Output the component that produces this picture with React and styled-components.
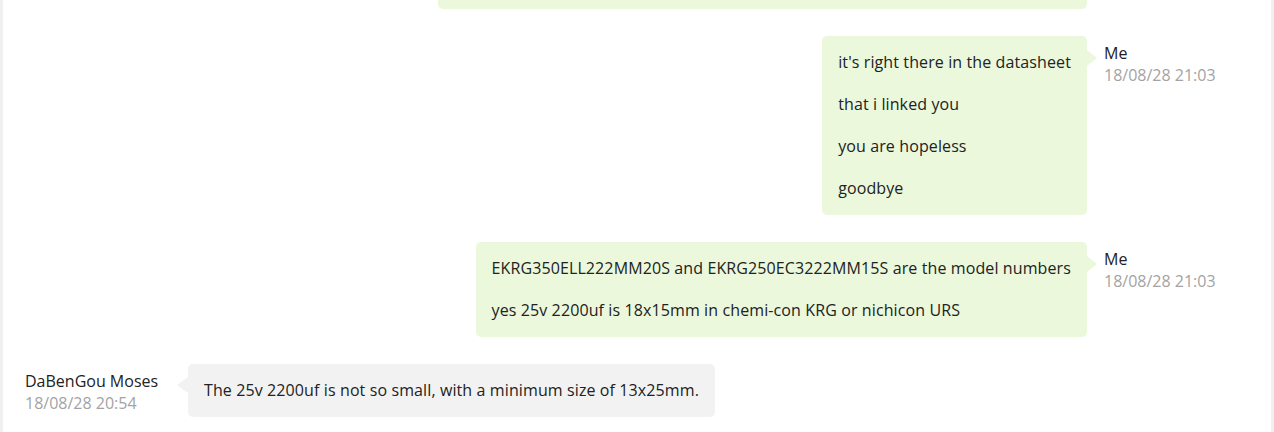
import React from 'react';
import styled, { createGlobalStyle } from 'styled-components';

const GlobalStyle = createGlobalStyle`
  html, body {
    margin: 0;
    padding: 0;
    background: #f0f0f0;
  }
  body {
    font-family: "Open Sans", "Liberation Sans", sans-serif;
    color: #222;
  }
`;

const Panel = styled.div`
  height: 432px;
  margin: 0 3px;
  background: #fff;
  overflow: hidden;
  display: flex;
  flex-direction: column;
  justify-content: flex-end;
  padding: 0 21px 15px 22px;
  box-sizing: border-box;
`;

const Row = styled.div`
  display: flex;
  flex-direction: ${p => (p.$mine ? 'row-reverse' : 'row')};
  align-items: flex-start;
  gap: 17px;
  margin-top: 27px;
  flex-shrink: 0;
`;

const Meta = styled.div`
  width: 146px;
  flex-shrink: 0;
  padding-top: 6px;
  font-size: 16px;
  line-height: 22px;
`;

const Name = styled.div`
  color: #222;
`;

const Time = styled.div`
  color: #a3a3a3;
`;

const Bubble = styled.div`
  position: relative;
  background: ${p => (p.$mine ? '#ebf8dc' : '#f2f2f2')};
  border-radius: 5px;
  padding: 16px;
  font-size: 16px;
  line-height: 21px;
  letter-spacing: 0.11px;
  ${p => p.$width && `width: ${p.$width}px; box-sizing: border-box;`}

  &::after {
    content: '';
    position: absolute;
    top: ${p => (p.$mine ? '14px' : '13px')};
    ${p => (p.$mine ? 'right: -10px;' : 'left: -11px;')}
    border-style: solid;
    border-color: transparent;
    border-width: 8px 0 8px 0;
    ${p =>
      p.$mine
        ? 'border-left: 10px solid #ebf8dc;'
        : 'border-right: 11px solid #f2f2f2;'}
  }
`;

const Line = styled.p`
  margin: 0 0 21px;
  white-space: nowrap;
  &:last-child {
    margin-bottom: 0;
  }
`;

const messages = [
  {
    mine: true,
    name: 'Me',
    time: '18/08/28 21:02',
    width: 649,
    lines: [
      'the datasheet lists the case sizes for every voltage and capacitance',
      'look at the table on page 2',
      'the 25v 2200uf part is right there',
    ],
  },
  {
    mine: true,
    name: 'Me',
    time: '18/08/28 21:03',
    lines: [
      "it's right there in the datasheet",
      'that i linked you',
      'you are hopeless',
      'goodbye',
    ],
  },
  {
    mine: true,
    name: 'Me',
    time: '18/08/28 21:03',
    lines: [
      'EKRG350ELL222MM20S and EKRG250EC3222MM15S are the model numbers',
      'yes 25v 2200uf is 18x15mm in chemi-con KRG or nichicon URS',
    ],
  },
  {
    mine: false,
    name: 'DaBenGou Moses',
    time: '18/08/28 20:54',
    lines: ['The 25v 2200uf is not so small, with a minimum size of 13x25mm.'],
  },
];

export default function App() {
  return (
    <>
      <GlobalStyle />
      <Panel>
        {messages.map((m, i) => (
          <Row key={i} $mine={m.mine}>
            <Meta $mine={m.mine}>
              <Name>{m.name}</Name>
              <Time>{m.time}</Time>
            </Meta>
            <Bubble $mine={m.mine} $width={m.width}>
              {m.lines.map((l, j) => (
                <Line key={j}>{l}</Line>
              ))}
            </Bubble>
          </Row>
        ))}
      </Panel>
    </>
  );
}
